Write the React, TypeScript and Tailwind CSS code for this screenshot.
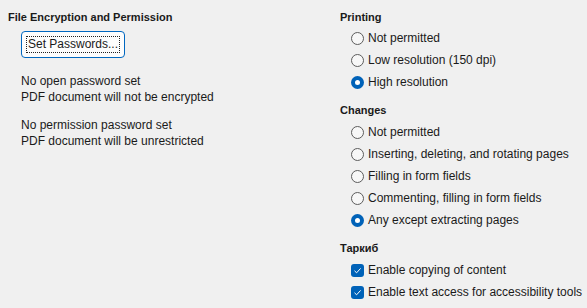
import React from "react";

function Radio({ label, checked = false }: { label: string; checked?: boolean }) {
  return (
    <div className="flex items-center h-[22px] pl-[11px]">
      {checked ? (
        <span className="w-[13px] h-[13px] rounded-full bg-[#0062b8] flex items-center justify-center">
          <span className="w-[5px] h-[5px] rounded-full bg-white" />
        </span>
      ) : (
        <span className="w-[13px] h-[13px] rounded-full border border-[#5c5c5c] bg-[#f7f7f7]" />
      )}
      <span className="ml-[4px]">{label}</span>
    </div>
  );
}

function Check({ label }: { label: string }) {
  return (
    <div className="flex items-center h-[22px] pl-[11px]">
      <span className="w-[13px] h-[13px] rounded-[3px] bg-[#0062b8] flex items-center justify-center">
        <svg width="9" height="9" viewBox="0 0 9 9" fill="none">
          <path d="M1.5 4.8 L3.6 6.8 L7.6 2.4" stroke="white" strokeWidth="1" />
        </svg>
      </span>
      <span className="ml-[4px]">{label}</span>
    </div>
  );
}

export default function App() {
  return (
    <div
      className="w-[587px] h-[308px] bg-[#f0f0f0] text-[#1a1a1a] text-[12px] leading-[16px] flex"
      style={{ fontFamily: '"Liberation Sans", Arial, sans-serif' }}
    >
      {/* Encryption */}
      <div className="w-[340px] pl-[8px] pt-[9px]">
        <p className="font-bold text-[11px] h-[16px]">File Encryption and Permission</p>
        <button className="mt-[6px] ml-[13px] w-[104px] h-[27px] border border-[#0067c0] rounded-[4px] bg-[#fdfdfd] flex items-center justify-center">
          <span className="border border-dotted border-[#222] px-[1px] leading-[15px]">Set Passwords...</span>
        </button>
        <div className="mt-[15px] pl-[13px]">
          <p>No open password set</p>
          <p>PDF document will not be encrypted</p>
        </div>
        <div className="mt-[12px] pl-[13px]">
          <p>No permission password set</p>
          <p>PDF document will be unrestricted</p>
        </div>
      </div>

      {/* Permissions */}
      <div className="flex-1 pt-[9px]">
        <p className="font-bold text-[11px] h-[16px]">Printing</p>
        <div className="mt-[2px]">
          <Radio label="Not permitted" />
          <Radio label="Low resolution (150 dpi)" />
          <Radio label="High resolution" checked />
        </div>
        <p className="font-bold text-[11px] h-[16px] mt-[9px]">Changes</p>
        <div className="mt-[3px]">
          <Radio label="Not permitted" />
          <Radio label="Inserting, deleting, and rotating pages" />
          <Radio label="Filling in form fields" />
          <Radio label="Commenting, filling in form fields" />
          <Radio label="Any except extracting pages" checked />
        </div>
        <p className="font-bold text-[11px] h-[16px] mt-[9px]">Таркиб</p>
        <div className="mt-[3px]">
          <Check label="Enable copying of content" />
          <Check label="Enable text access for accessibility tools" />
        </div>
      </div>
    </div>
  );
}
